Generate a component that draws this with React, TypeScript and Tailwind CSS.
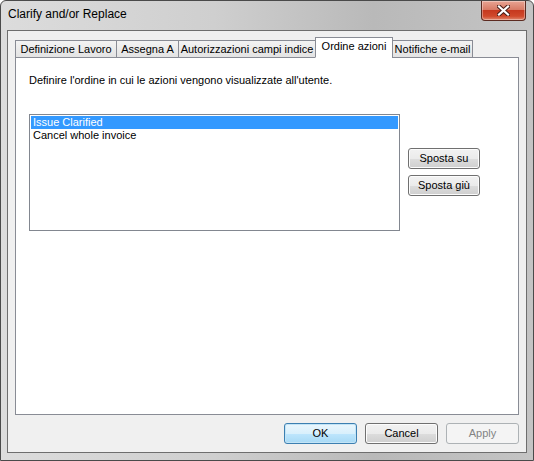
import React from "react";

const tabs = [
  { label: "Definizione Lavoro", w: "w-[102px]" },
  { label: "Assegna A", w: "w-[63px]" },
  { label: "Autorizzazioni campi indice", w: "w-[138px]" },
  { label: "Ordine azioni", w: "w-[78px]", active: true },
  { label: "Notifiche e-mail", w: "w-[81px]" },
];

function WinButton({
  children,
  className = "",
  variant = "normal",
}: {
  children: React.ReactNode;
  className?: string;
  variant?: "normal" | "default" | "disabled";
}) {
  const styles =
    variant === "default"
      ? "border-[#3c7fb1] bg-[linear-gradient(#eaf6fd_0%,#d9f0fc_50%,#bee6fd_51%,#a7d9f5_100%)] text-black shadow-[inset_0_0_0_1px_#c3e4f6]"
      : variant === "disabled"
      ? "border-[#adb2b5] bg-[#f4f4f4] text-[#838383]"
      : "border-[#707070] bg-[linear-gradient(#f2f2f2_0%,#ebebeb_50%,#dddddd_51%,#cfcfcf_100%)] text-black shadow-[inset_0_0_0_1px_#fcfcfc]";
  return (
    <div
      className={`flex items-center justify-center rounded-[3px] border text-[11px] leading-none ${styles} ${className}`}
    >
      {children}
    </div>
  );
}

export default function App() {
  return (
    <div
      className="relative flex h-[461px] w-[534px] flex-col overflow-hidden rounded-t-[6px] border border-[#4a4a4a] bg-[linear-gradient(90deg,#dcdcdc_0%,#cfcfcf_40%,#b9b9b9_70%,#c4c4c4_100%)]"
      style={{ fontFamily: '"Liberation Sans", Arial, sans-serif' }}
    >
      {/* title bar */}
      <div className="flex h-[29px] shrink-0 items-start justify-between">
        <span className="pl-[7px] pt-[7px] text-[12px] leading-none text-black">
          Clarify and/or Replace
        </span>
        <div className="mr-[7px] flex h-[20px] w-[45px] items-center justify-center rounded-b-[4px] border border-t-0 border-[#5c2a20] bg-[linear-gradient(#e8a493_0%,#d87b66_45%,#c6391f_50%,#d0492b_80%,#e0886f_100%)] shadow-[inset_0_0_0_1px_rgba(255,255,255,0.35)]">
          <svg width="13" height="11" viewBox="0 0 13 11">
            <path
              d="M2 1.5 L11 9.5 M11 1.5 L2 9.5"
              stroke="#4a1f18"
              strokeWidth="4.2"
              strokeLinecap="square"
            />
            <path
              d="M2 1.5 L11 9.5 M11 1.5 L2 9.5"
              stroke="#ffffff"
              strokeWidth="2.2"
              strokeLinecap="square"
            />
          </svg>
        </div>
      </div>

      {/* client area */}
      <div className="mx-[6px] mb-[7px] flex flex-1 flex-col border border-[#6e6e6e] bg-[#f0f0f0] px-[7px] pt-[6px]">
        {/* tabs */}
        <div className="relative z-10 -mb-px flex h-[21px] items-end">
          {tabs.map((t) =>
            t.active ? (
              <div
                key={t.label}
                className={`${t.w} -ml-px flex h-[21px] items-start justify-center border border-b-white border-[#898c95] bg-white pt-[3px] text-[11px] leading-none text-black`}
              >
                {t.label}
              </div>
            ) : (
              <div
                key={t.label}
                className={`${t.w} -ml-px flex h-[18px] items-center justify-center border border-[#898c95] bg-[linear-gradient(#f3f3f3,#e3e3e3)] text-[11px] leading-none text-black first:ml-0`}
              >
                {t.label}
              </div>
            )
          )}
        </div>

        {/* panel */}
        <div className="flex h-[358px] flex-col border border-[#898c95] bg-white px-[13px] pt-[17px]">
          <p className="text-[11px] leading-none text-black">
            Definire l'ordine in cui le azioni vengono visualizzate all'utente.
          </p>
          <div className="mt-[28px] flex items-start">
            <div className="h-[117px] w-[371px] border border-[#828790] bg-white p-px">
              <div className="flex h-[13px] items-center bg-[#3399ff] pl-[2px] text-[11px] leading-none text-white">
                Issue Clarified
              </div>
              <div className="flex h-[13px] items-center pl-[2px] text-[11px] leading-none text-black">
                Cancel whole invoice
              </div>
            </div>
            <div className="ml-[8px] mt-[34px] flex flex-col gap-[6px]">
              <WinButton className="h-[21px] w-[72px]">Sposta su</WinButton>
              <WinButton className="h-[21px] w-[72px]">Sposta giù</WinButton>
            </div>
          </div>
        </div>

        {/* dialog buttons */}
        <div className="flex flex-1 items-center justify-end gap-[8px]">
          <WinButton variant="default" className="h-[21px] w-[73px]">
            OK
          </WinButton>
          <WinButton className="h-[21px] w-[73px]">Cancel</WinButton>
          <WinButton variant="disabled" className="h-[21px] w-[73px]">
            Apply
          </WinButton>
        </div>
      </div>
    </div>
  );
}
